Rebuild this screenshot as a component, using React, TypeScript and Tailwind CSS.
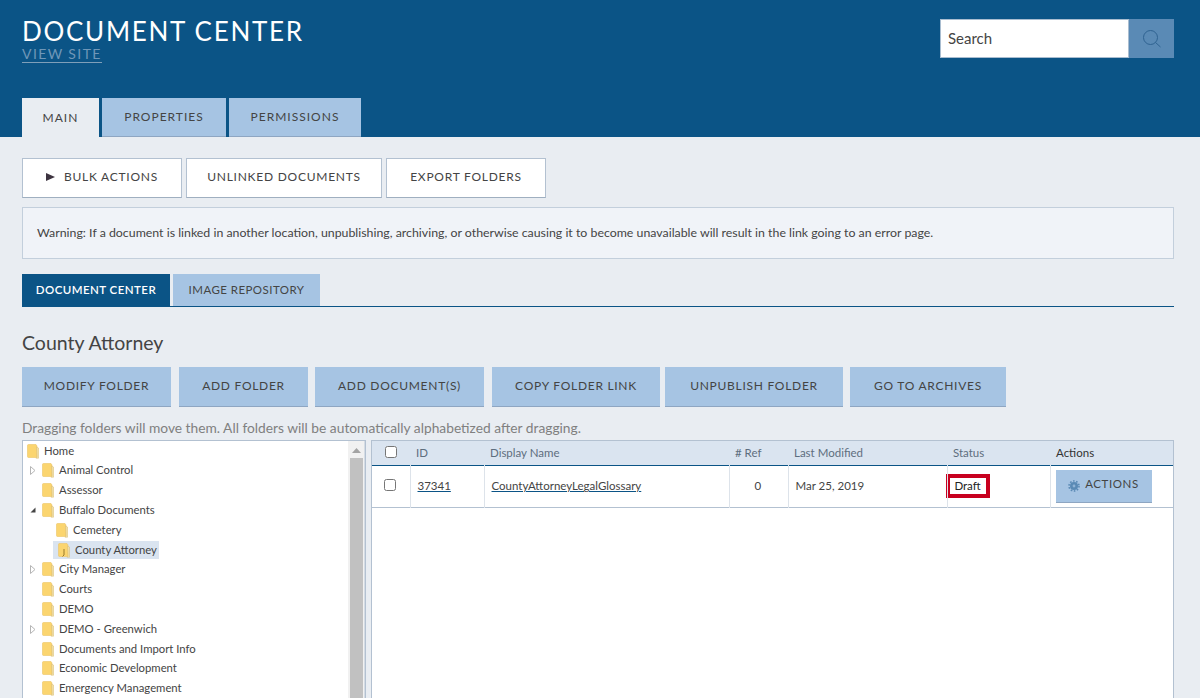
import React from "react";

const font = "font-['Lato','Liberation_Sans',sans-serif]";

function Folder({ open = false }: { open?: boolean }) {
  return (
    <svg width="12" height="15" viewBox="0 0 12 15" className="shrink-0">
      <path d="M0.5 1.5 Q0.5 0.5 1.5 0.5 H9 L10 2 V13.5 H1.5 Q0.5 13.5 0.5 12.5 Z" fill="#fbd56f" stroke="#edc566" strokeWidth="0.6" />
      <path d="M9.5 3 L11.5 4 V14.2 H9 L10 12.5 Z" fill="#f2dfa6" stroke="#d9bd72" strokeWidth="0.5" />
      {open && <path d="M6 6 V12 L4.5 13.5" fill="none" stroke="#9a7a2a" strokeWidth="1" />}
    </svg>
  );
}

function Row({ label, indent = 0, arrow, selected }: { label: string; indent?: number; arrow?: "closed" | "open"; selected?: boolean }) {
  return (
    <div className="flex h-[19.8px] items-center">
      <div className="flex w-[18px] shrink-0 justify-center" style={{ marginLeft: indent }}>
        {arrow === "closed" && (
          <svg width="6" height="9" viewBox="0 0 6 9"><path d="M0.5 0.5 L5 4.5 L0.5 8.5 Z" fill="#fff" stroke="#b5b5b5" /></svg>
        )}
        {arrow === "open" && (
          <svg width="6" height="6" viewBox="0 0 6 6"><path d="M5.5 0.5 V5.5 H0.5 Z" fill="#444" /></svg>
        )}
      </div>
      {selected ? (
        <div className="flex h-[18px] items-center gap-[5px] bg-[#dae4f0] pr-[2px] pl-[5px]">
          <Folder open />
          <span>{label}</span>
        </div>
      ) : (
        <div className="flex items-center gap-[5px]">
          <Folder />
          <span>{label}</span>
        </div>
      )}
    </div>
  );
}

const tree: { label: string; indent?: number; arrow?: "closed" | "open"; selected?: boolean }[] = [
  { label: "Animal Control", arrow: "closed" },
  { label: "Assessor" },
  { label: "Buffalo Documents", arrow: "open" },
  { label: "Cemetery", indent: 14 },
  { label: "County Attorney", indent: 11, selected: true },
  { label: "City Manager", arrow: "closed" },
  { label: "Courts" },
  { label: "DEMO" },
  { label: "DEMO - Greenwich", arrow: "closed" },
  { label: "Documents and Import Info" },
  { label: "Economic Development" },
  { label: "Emergency Management" },
];

function BlueBtn({ children, w }: { children: React.ReactNode; w: string }) {
  return (
    <button className={`${w} h-10 shrink-0 border-b border-b-[#8ea6c2] bg-[#a6c4e3] pb-[2px] text-[12px] tracking-[0.72px] text-[#444] uppercase`}>
      {children}
    </button>
  );
}

export default function App() {
  return (
    <div className={`${font} h-[698px] w-[1200px] overflow-hidden bg-[#e9edf2] text-[#444]`}>
      <header className="flex h-[137px] flex-col justify-between bg-[#0b5486] pr-[26px] pl-[22px]">
        <div className="flex items-start justify-between">
          <div className="pt-[15px]">
            <h1 className="text-[26px] leading-[32px] tracking-[1.7px] text-white">DOCUMENT CENTER</h1>
            <a className="-mt-[2px] block w-fit border-b border-b-[#7f9fb9] text-[14px] leading-[17px] tracking-[1.4px] text-[#6f97b8]">VIEW SITE</a>
          </div>
          <div className="mt-[19px] flex h-[39px]">
            <div className="flex w-[189px] items-center border border-[#a9bdd0] bg-white pl-[7px] text-[15px] text-[#444]">Search</div>
            <div className="flex w-[45px] items-center justify-center bg-[#5a8ab5]">
              <svg width="18" height="18" viewBox="0 0 18 18" fill="none" stroke="#2f6391" strokeWidth="1">
                <circle cx="7.5" cy="7.5" r="7" />
                <path d="M12.5 12.5 L17.5 17" />
              </svg>
            </div>
          </div>
        </div>
        <nav className="flex gap-[3px] text-[12px] tracking-[1px]">
          <div className="flex h-[39px] w-[77px] items-center justify-center bg-[#e9edf2]">MAIN</div>
          <div className="flex h-[39px] w-[124px] items-center justify-center border-b border-b-[#8ea6c2] bg-[#a6c4e3]">PROPERTIES</div>
          <div className="flex h-[39px] w-[132px] items-center justify-center border-b border-b-[#8ea6c2] bg-[#a6c4e3]">PERMISSIONS</div>
        </nav>
      </header>

      <main className="pt-[21px] pr-[26px] pl-[22px]">
        <div className="flex gap-1 text-[12px] tracking-[0.75px]">
          <button className="flex h-10 w-40 items-center justify-center gap-[9px] border border-[#b3c1d1] border-b-[#9fafc0] bg-white pb-[2px]">
            <svg width="9" height="8" viewBox="0 0 9 8"><path d="M0 0 L9 4 L0 8 Z" fill="#3d3440" /></svg>
            BULK ACTIONS
          </button>
          <button className="h-10 w-[196px] border border-[#b3c1d1] border-b-[#9fafc0] bg-white pb-[2px]">UNLINKED DOCUMENTS</button>
          <button className="h-10 w-40 border border-[#b3c1d1] border-b-[#9fafc0] bg-white pb-[2px]">EXPORT FOLDERS</button>
        </div>

        <div className="mt-[9px] flex h-[52px] items-center border border-[#c3cfdc] bg-[#f0f3f8] pl-[14px] text-[12.35px]">
          Warning: If a document is linked in another location, unpublishing, archiving, or otherwise causing it to become unavailable will result in the link going to an error page.
        </div>

        <div className="mt-[15px] flex h-[33px] gap-[3px] border-b border-b-[#0b5486] text-[11.5px] tracking-[0.45px]">
          <div className="flex w-[148px] items-center justify-center bg-[#0b5486] font-semibold text-white">DOCUMENT CENTER</div>
          <div className="flex w-[147px] items-center justify-center bg-[#a6c4e3]">IMAGE REPOSITORY</div>
        </div>

        <h2 className="mt-[23px] text-[19.5px] leading-[26px]">County Attorney</h2>

        <div className="mt-[11px] flex">
          <BlueBtn w="w-[149px] mr-2">Modify Folder</BlueBtn>
          <BlueBtn w="w-[129px] mr-[7px]">Add Folder</BlueBtn>
          <BlueBtn w="w-[169px] mr-2">Add Document(s)</BlueBtn>
          <BlueBtn w="w-[168px] mr-[5px]">Copy Folder Link</BlueBtn>
          <BlueBtn w="w-[178px] mr-[7px]">Unpublish Folder</BlueBtn>
          <BlueBtn w="w-[156px]">Go to Archives</BlueBtn>
        </div>

        <p className="mt-[12px] text-[13.78px] leading-[18px] text-[#808080]">
          Dragging folders will move them. All folders will be automatically alphabetized after dragging.
        </p>

        <div className="mt-[3px] flex h-[300px] gap-[5px]">
          <div className="relative h-full w-[344px] shrink-0 overflow-hidden border border-[#b3c1d1] bg-white text-[11.3px]">
            <div className="flex h-5 items-center gap-[5px] pl-1">
              <Folder />
              <span>Home</span>
            </div>
            <div className="pl-[1px]">
              {tree.map((t) => (
                <Row key={t.label} {...t} />
              ))}
            </div>
            <div className="absolute top-0 right-0 bottom-0 flex w-[17px] flex-col items-center border-r border-r-[#d5dce4] bg-[#f1f1f1]">
              <svg width="9" height="5" viewBox="0 0 9 5" className="mt-[7px]"><path d="M0 5 L4.5 0 L9 5 Z" fill="#a3a3a3" /></svg>
              <div className="mt-[5px] w-[13px] flex-1 bg-[#c1c1c1]" />
            </div>
          </div>

          <div className="h-full flex-1 border-t border-r border-l border-[#b3c1d1] bg-white">
            <table className="w-full table-fixed border-collapse text-[11.5px]">
              <colgroup>
                <col className="w-[38px]" />
                <col className="w-[74px]" />
                <col className="w-[245px]" />
                <col className="w-[59px]" />
                <col className="w-[159px]" />
                <col className="w-[103px]" />
                <col />
              </colgroup>
              <thead>
                <tr className="h-[24px] border-b border-b-[#0b5486] bg-[#dae4f0] text-left font-normal text-[#5e6e7e]">
                  <th className="pr-[1px] text-center font-normal"><input type="checkbox" className="-mt-1 inline-block h-3 w-3 align-middle" /></th>
                  <th className="pl-[6px] font-normal">ID</th>
                  <th className="pl-[6px] font-normal">Display Name</th>
                  <th className="pl-[6px] font-normal">
                    # Ref
                  </th>
                  <th className="pl-[6px] font-normal">Last Modified</th>
                  <th className="pl-[6px] font-normal">Status</th>
                  <th className="pl-[6px] font-normal text-[#333]">Actions</th>
                </tr>
              </thead>
              <tbody>
                <tr className="h-[42px] border-b border-b-[#b3c1d1]">
                  <td className="border-r border-r-[#dde3ea] pr-[1px] text-center"><input type="checkbox" className="-mt-1 inline-block h-3 w-3 align-middle" /></td>
                  <td className="border-r border-r-[#dde3ea] pl-[7px] text-[#444]"><a className="underline decoration-[#0b5486]">37341</a></td>
                  <td className="border-r border-r-[#dde3ea] pl-[7px]"><a className="underline decoration-[#0b5486]">CountyAttorneyLegalGlossary</a></td>
                  <td className="border-r border-r-[#dde3ea] pl-[25px]">0</td>
                  <td className="border-r border-r-[#dde3ea] pl-[7px]">Mar 25, 2019</td>
                  <td className="border-r border-r-[#dde3ea] pl-0">
                    <span className="-mt-px -ml-[2px] flex h-6 w-11 items-center justify-center border-4 border-[#c8001f] text-[#222]">Draft</span>
                  </td>
                  <td className="pl-[5px]">
                    <button className="flex h-[33px] w-24 items-center justify-center gap-[5px] border-b border-b-[#8ea6c2] bg-[#a6c4e3] pb-[3px] tracking-[0.6px]">
                      <svg width="12" height="12" viewBox="0 0 12 12" className="mt-[3px]">
                        <circle cx="6" cy="6" r="4" fill="#5a8ab5" />
                        <circle cx="6" cy="6" r="5" fill="none" stroke="#5a8ab5" strokeWidth="1.6" strokeDasharray="1.6 1.54" />
                        <circle cx="6" cy="6" r="1.4" fill="#8fb3d6" />
                      </svg>
                      ACTIONS
                    </button>
                  </td>
                </tr>
              </tbody>
            </table>
          </div>
        </div>
      </main>
    </div>
  );
}
